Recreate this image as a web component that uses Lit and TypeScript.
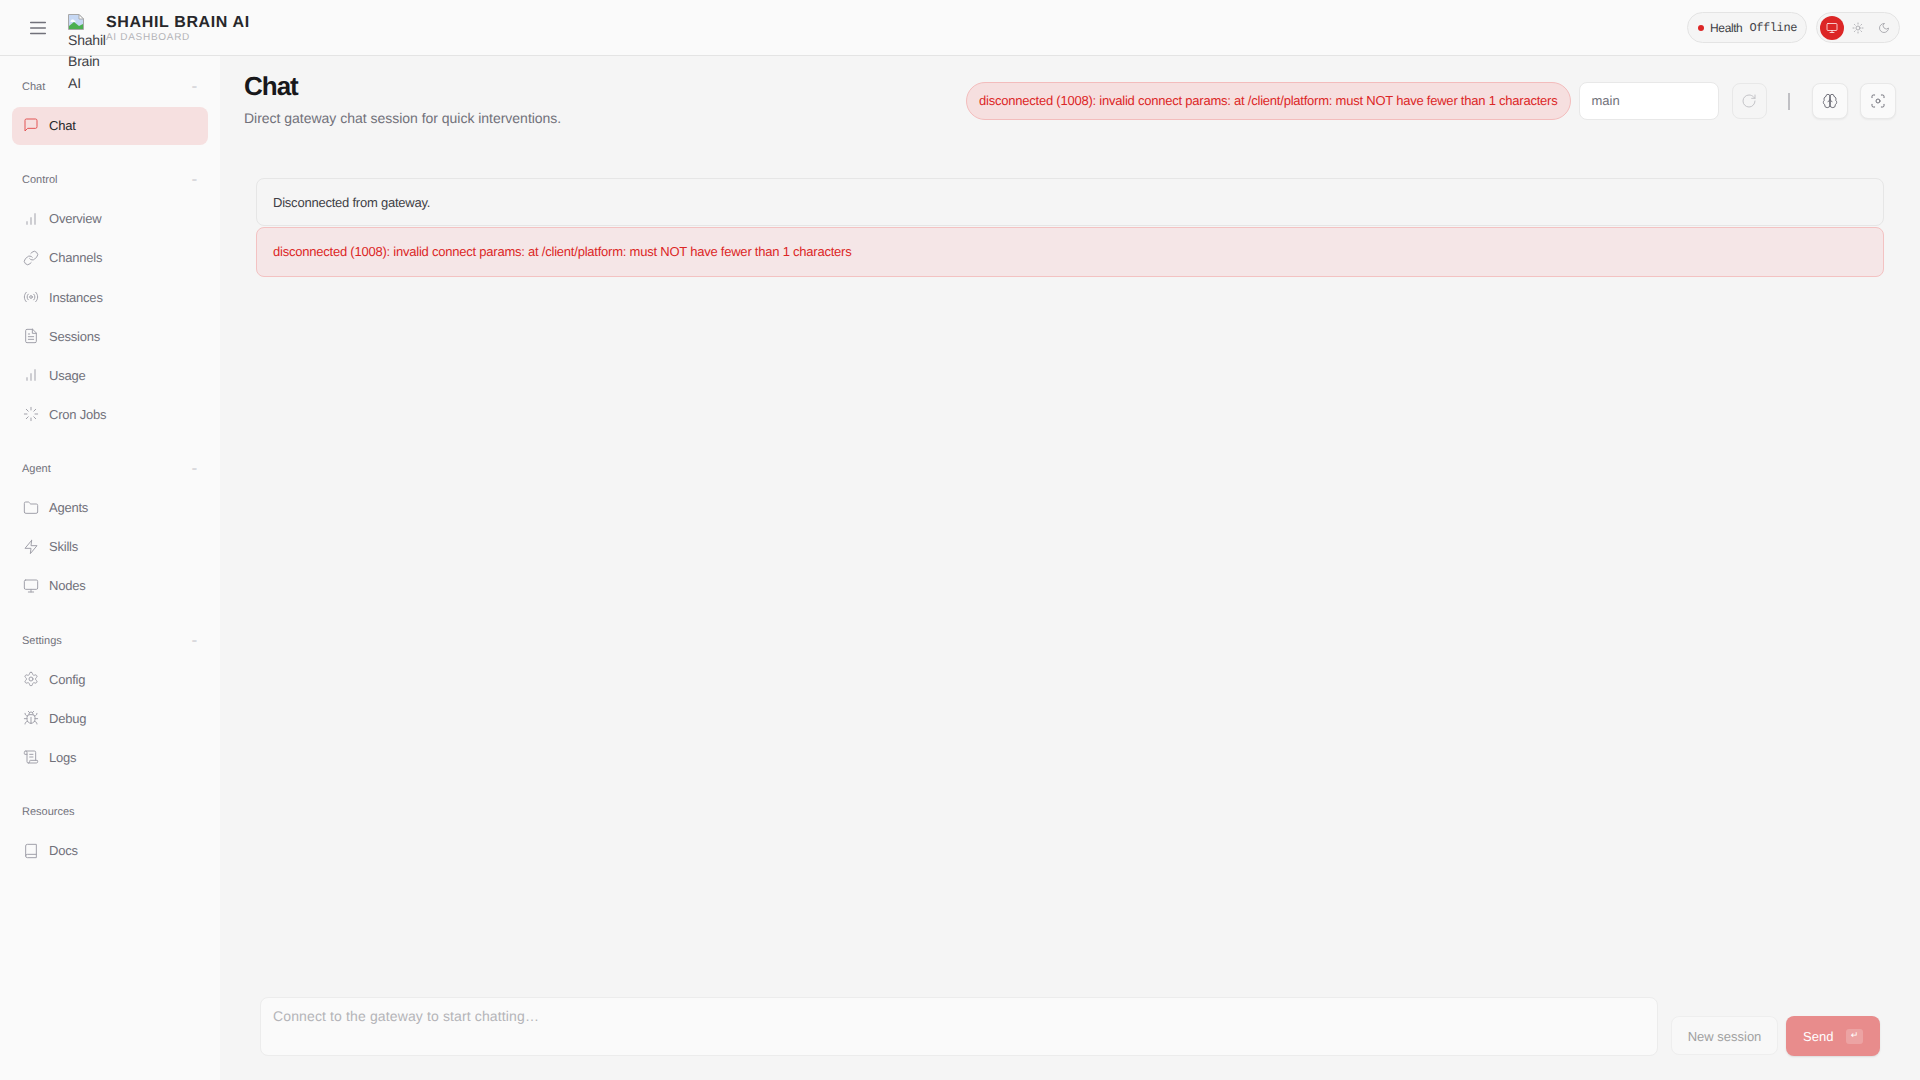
import { LitElement, html, css, svg } from "lit";
import { customElement } from "lit/decorators.js";

const ic = (body: unknown, cls = "") => html`<svg class="ic ${cls}" viewBox="0 0 24 24" fill="none" stroke="currentColor" stroke-width="1.5" stroke-linecap="round" stroke-linejoin="round">${body}</svg>`;
const p = (...ds: string[]) => ds.map((d) => svg`<path d=${d}></path>`);

const I = {
  menu: svg`<path d="M4 12h16M4 6h16M4 18h16"></path>`,
  chat: p("M21 15a2 2 0 0 1-2 2H7l-4 4V5a2 2 0 0 1 2-2h14a2 2 0 0 1 2 2z"),
  bars: p("M12 20V10", "M18 20V4", "M6 20v-4"),
  link: p("M10 13a5 5 0 0 0 7.54.54l3-3a5 5 0 0 0-7.07-7.07l-1.72 1.71", "M14 11a5 5 0 0 0-7.54-.54l-3 3a5 5 0 0 0 7.07 7.07l1.71-1.71"),
  radio: svg`${p("M4.9 19.1C1 15.2 1 8.8 4.9 4.9", "M7.8 16.2c-2.3-2.3-2.3-6.1 0-8.5", "M16.2 7.8c2.3 2.3 2.3 6.1 0 8.5", "M19.1 4.9C23 8.8 23 15.1 19.1 19")}<circle cx="12" cy="12" r="2"></circle>`,
  file: p("M14.5 2H6a2 2 0 0 0-2 2v16a2 2 0 0 0 2 2h12a2 2 0 0 0 2-2V7.5L14.5 2z", "M14 2v6h6", "M16 13H8", "M16 17H8", "M10 9H8"),
  loader: p("M12 2v4", "m16.2 7.8 2.9-2.9", "M18 12h4", "m16.2 16.2 2.9 2.9", "M12 18v4", "m4.9 19.1 2.9-2.9", "M2 12h4", "m4.9 4.9 2.9 2.9"),
  folder: p("M20 20a2 2 0 0 0 2-2V8a2 2 0 0 0-2-2h-7.9a2 2 0 0 1-1.69-.9L9.6 3.9A2 2 0 0 0 7.93 3H4a2 2 0 0 0-2 2v13a2 2 0 0 0 2 2Z"),
  zap: p("M13 2 3 14h9l-1 8 10-12h-9l1-8z"),
  monitor: svg`<rect x="2" y="3" width="20" height="14" rx="2"></rect>${p("M8 21h8", "M12 17v4")}`,
  gear: svg`${p("M12.22 2h-.44a2 2 0 0 0-2 2v.18a2 2 0 0 1-1 1.73l-.43.25a2 2 0 0 1-2 0l-.15-.08a2 2 0 0 0-2.73.73l-.22.38a2 2 0 0 0 .73 2.73l.15.1a2 2 0 0 1 1 1.72v.51a2 2 0 0 1-1 1.74l-.15.09a2 2 0 0 0-.73 2.73l.22.38a2 2 0 0 0 2.73.73l.15-.08a2 2 0 0 1 2 0l.43.25a2 2 0 0 1 1 1.73V20a2 2 0 0 0 2 2h.44a2 2 0 0 0 2-2v-.18a2 2 0 0 1 1-1.73l.43-.25a2 2 0 0 1 2 0l.15.08a2 2 0 0 0 2.73-.73l.22-.39a2 2 0 0 0-.73-2.73l-.15-.08a2 2 0 0 1-1-1.74v-.5a2 2 0 0 1 1-1.74l.15-.09a2 2 0 0 0 .73-2.73l-.22-.38a2 2 0 0 0-2.73-.73l-.15.08a2 2 0 0 1-2 0l-.43-.25a2 2 0 0 1-1-1.73V4a2 2 0 0 0-2-2z")}<circle cx="12" cy="12" r="3"></circle>`,
  bug: p("m8 2 1.88 1.88", "M14.12 3.88 16 2", "M9 7.13v-1a3.003 3.003 0 1 1 6 0v1", "M12 20c-3.3 0-6-2.7-6-6v-3a4 4 0 0 1 4-4h4a4 4 0 0 1 4 4v3c0 3.3-2.7 6-6 6", "M12 20v-9", "M6.53 9C4.6 8.8 3 7.1 3 5", "M6 13H2", "M3 21c0-2.1 1.7-3.9 3.8-4", "M20.97 5c0 2.1-1.6 3.8-3.5 4", "M22 13h-4", "M17.2 17c2.1.1 3.8 1.9 3.8 4"),
  scroll: p("M15 12h-5", "M15 8h-5", "M19 17V5a2 2 0 0 0-2-2H4", "M8 21h12a2 2 0 0 0 2-2v-1a1 1 0 0 0-1-1H11a1 1 0 0 0-1 1v1a2 2 0 1 1-4 0V5a2 2 0 1 0-4 0v2a1 1 0 0 0 1 1h3"),
  book: p("M4 19.5v-15A2.5 2.5 0 0 1 6.5 2H20v20H6.5a2.5 2.5 0 0 1 0-5H20"),
  sun: svg`<circle cx="12" cy="12" r="4"></circle>${p("M12 2v2", "M12 20v2", "m4.93 4.93 1.41 1.41", "m17.66 17.66 1.41 1.41", "M2 12h2", "M20 12h2", "m6.34 17.66-1.41 1.41", "m19.07 4.93-1.41 1.41")}`,
  moon: p("M12 3a6 6 0 0 0 9 9 9 9 0 1 1-9-9Z"),
  refresh: p("M21 12a9 9 0 1 1-9-9c2.52 0 4.93 1 6.74 2.74L21 8", "M21 3v5h-5"),
  brain: p("M12 5a3 3 0 1 0-5.997.125 4 4 0 0 0-2.526 5.77 4 4 0 0 0 .556 6.588A4 4 0 1 0 12 18Z", "M12 5a3 3 0 1 1 5.997.125 4 4 0 0 1 2.526 5.77 4 4 0 0 1-.556 6.588A4 4 0 1 1 12 18Z", "M15 13a4.5 4.5 0 0 1-3-4 4.5 4.5 0 0 1-3 4", "M12 18V5"),
  focus: svg`${p("M3 7V5a2 2 0 0 1 2-2h2", "M17 3h2a2 2 0 0 1 2 2v2", "M21 17v2a2 2 0 0 1-2 2h-2", "M7 21H5a2 2 0 0 1-2-2v-2")}<circle cx="12" cy="12" r="3"></circle>`,
};

const groups = [
  { label: "Chat", dash: true, items: [{ n: "Chat", i: I.chat, active: true }] },
  { label: "Control", dash: true, items: [
    { n: "Overview", i: I.bars }, { n: "Channels", i: I.link }, { n: "Instances", i: I.radio },
    { n: "Sessions", i: I.file }, { n: "Usage", i: I.bars }, { n: "Cron Jobs", i: I.loader },
  ] },
  { label: "Agent", dash: true, items: [{ n: "Agents", i: I.folder }, { n: "Skills", i: I.zap }, { n: "Nodes", i: I.monitor }] },
  { label: "Settings", dash: true, items: [{ n: "Config", i: I.gear }, { n: "Debug", i: I.bug }, { n: "Logs", i: I.scroll }] },
  { label: "Resources", dash: false, items: [{ n: "Docs", i: I.book }] },
];

const ERR = "disconnected (1008): invalid connect params: at /client/platform: must NOT have fewer than 1 characters";

@customElement("app-root")
export class AppRoot extends LitElement {
  static styles = css`
    :host { display: grid; grid-template-columns: 220px 1fr; grid-template-rows: 56px 1fr; height: 100vh; background: #f5f5f5; font-family: "Liberation Sans", Arial, sans-serif; color: #18181b; overflow: hidden; text-rendering: geometricPrecision; }
    * { box-sizing: border-box; }
    .ic { width: 16px; height: 16px; flex: none; display: block; }

    .top { grid-column: 1 / 3; display: flex; align-items: center; padding: 0 20px; background: #fafafa; border-bottom: 1px solid #e4e4e4; position: relative; z-index: 2; }
    .burger { width: 36px; height: 36px; display: flex; align-items: center; justify-content: center; color: #71717a; margin-right: 12px; }
    .burger .ic { width: 22px; height: 22px; }
    .logo { width: 38px; height: 28px; align-self: flex-start; margin-top: 14px; font-size: 14px; letter-spacing: -0.2px; line-height: 21.4px; color: #3f3f46; }
    .logo svg { display: block; width: 16px; height: 16px; }
    .logo span { display: block; width: 32px; }
    .brand { display: flex; flex-direction: column; padding-top: 3px; }
    .brand b { font-size: 16px; line-height: 18px; font-weight: 700; letter-spacing: 0.64px; color: #27272a; }
    .brand small { font-size: 10px; line-height: 12px; letter-spacing: 0.7px; color: #b4b4b8; }
    .spacer { flex: 1; }
    .pill { height: 31px; border: 1px solid #e4e4e4; border-radius: 16px; background: #f5f5f5; display: flex; align-items: center; }
    .health { padding: 0 9px 0 10px; font-size: 12px; letter-spacing: -0.4px; color: #3f3f46; margin-right: 9px; }
    .dot { width: 6px; height: 6px; border-radius: 50%; background: #dc2626; margin-right: 6px; }
    .health .hl { margin-right: 7px; }
    .health .hv { font-family: "Liberation Mono", monospace; }
    .theme { padding: 0 3px; gap: 2px; }
    .tb { width: 24px; height: 24px; border-radius: 50%; display: flex; align-items: center; justify-content: center; color: #98989f; }
    .tb .ic { width: 12px; height: 12px; }
    .tb.on { background: #dc2626; color: #fff; }

    .side { background: #fafafa; padding: 16.9px 12px 0; overflow: hidden; }
    .group { margin-bottom: 21.3px; }
    .glabel { height: 26px; margin-bottom: 8px; padding: 1.6px 10px 0; display: flex; align-items: center; justify-content: space-between; font-size: 11px; color: #71717a; }
    .glabel i { font-style: normal; font-size: 9px; color: #a1a1aa; padding-right: 1px; }
    .items { display: flex; flex-direction: column; gap: 1px; }
    .item { height: 38.1px; display: flex; align-items: center; gap: 10px; padding-left: 11px; padding-bottom: 1px; border-radius: 8px; font-size: 13px; letter-spacing: -0.22px; color: #71717a; }
    .item .ic { color: #a1a1aa; }
    .item.on { background: #f6e0e0; color: #27272a; }
    .item.on .ic { color: #dc2626; opacity: .75; }

    .main { display: flex; flex-direction: column; padding: 14px 24px 24px 24px; min-height: 0; min-width: 0; }
    .head { display: flex; justify-content: space-between; }
    h1 { margin: 0; font-size: 26px; line-height: 32px; font-weight: 700; letter-spacing: -1px; color: #18181b; }
    .sub { margin-top: 6px; font-size: 14px; line-height: 20px; letter-spacing: -0.02px; color: #71717a; }
    .ctrl { display: flex; align-items: center; height: 38px; margin-top: 12px; }
    .errpill { height: 38px; display: flex; align-items: center; padding: 0 12px 1px; border: 1px solid #f3bcbc; border-radius: 19px; background: #f6dfdf; font-size: 13px; letter-spacing: -0.225px; color: #dc2626; white-space: nowrap; margin-right: 8px; }
    .sess { width: 140px; height: 38px; border: 1px solid #e8e8e8; border-radius: 8px; background: #fff; padding: 0 12px 1px; display: flex; align-items: center; font-size: 13px; color: #71717a; margin-right: 13px; }
    .ib { width: 36px; height: 36px; border: 1px solid #e8e8e8; border-radius: 8px; background: #fafafa; display: flex; align-items: center; justify-content: center; color: #71717a; box-shadow: 0 1px 2px rgba(0,0,0,.05); }
    .ib.dis { width: 35px; background: #f5f5f5; color: #c4c4c8; box-shadow: none; margin-right: 21.5px; }
    .pipe { width: 2px; height: 17px; background: #c0c0c4; margin-right: 22px; }
    .ib.gap { margin-right: 12px; }

    .thread { margin: 50px 12px 0 12px; display: flex; flex-direction: column; gap: 1px; }
    .call { border: 1px solid #e6e6e6; border-radius: 8px; padding: 14px 16px 12px; font-size: 13px; letter-spacing: -0.225px; line-height: 20px; color: #3f3f46; background: #f5f5f5; }
    .call.err { padding: 14px 16px; border-color: #f3c2c2; background: #f5e6e7; color: #dc2626; }

    .composer { margin: auto 16px 0 16px; display: flex; align-items: flex-end; }
    textarea { flex: 1; min-width: 0; height: 59px; resize: none; border: 1px solid #ececec; border-radius: 8px; background: #fafafa; padding: 9px 12px; font: 14px/18px "Liberation Sans", Arial, sans-serif; letter-spacing: 0.13px; text-rendering: geometricPrecision; margin: 0 13px 0 0; outline: none; }
    textarea::placeholder { color: #b4b4b8; opacity: 1; }
    .new { width: 107px; height: 39px; border: 1px solid #eeeeee; border-radius: 8px; background: #f8f8f8; display: flex; align-items: center; justify-content: center; padding-top: 1px; font-size: 13px; color: #a1a1a1; margin: 0 8px 1px 0; }
    .send { width: 94px; height: 40px; border-radius: 8px; background: #e88c8c; color: #fff; display: flex; align-items: center; padding: 0 17px; font-size: 13px; justify-content: space-between; box-shadow: 0 1px 2px rgba(0,0,0,.1); }
    kbd { width: 17px; height: 15px; border-radius: 3px; background: rgba(255,255,255,.2); font: 9px "DejaVu Sans", sans-serif; display: flex; align-items: center; justify-content: center; color: #fff; }
  `;

  render() {
    return html`
      <header class="top">
        <div class="burger">${ic(I.menu)}</div>
        <div class="logo">
          <svg viewBox="0 0 16 16" aria-hidden="true">
            <path d="M0.5 0.5H11L15.5 5V15.5H0.5Z" fill="#c6d8f4" stroke="#a8a8a8"></path>
            <path d="M11 0.5V5H15.5Z" fill="#fff" stroke="#a8a8a8"></path>
            <path d="M1 15V12L6 8L11 12L15 10V15Z" fill="#4caf50"></path>
            <path d="M3 6.5C3 5 6 5 6.5 6.5C8 6.5 8 8 6.5 8H3.5C2 8 2 6.5 3 6.5Z" fill="#fff"></path>
          </svg>
          <span>Shahil Brain AI</span>
        </div>
        <div class="brand"><b>SHAHIL BRAIN AI</b><small>AI DASHBOARD</small></div>
        <div class="spacer"></div>
        <div class="pill health"><span class="dot"></span><span class="hl">Health</span><span class="hv">Offline</span></div>
        <div class="pill theme">
          <div class="tb on">${ic(I.monitor)}</div>
          <div class="tb">${ic(I.sun)}</div>
          <div class="tb">${ic(I.moon)}</div>
        </div>
      </header>
      <nav class="side">
        ${groups.map((g) => html`
          <section class="group">
            <div class="glabel"><span>${g.label}</span>${g.dash ? html`<i>−</i>` : ""}</div>
            <div class="items">
              ${g.items.map((it: any) => html`<div class="item ${it.active ? "on" : ""}">${ic(it.i)}<span>${it.n}</span></div>`)}
            </div>
          </section>`)}
      </nav>
      <main class="main">
        <div class="head">
          <div>
            <h1>Chat</h1>
            <div class="sub">Direct gateway chat session for quick interventions.</div>
          </div>
          <div class="ctrl">
            <div class="errpill">${ERR}</div>
            <div class="sess">main</div>
            <div class="ib dis">${ic(I.refresh)}</div>
            <div class="pipe"></div>
            <div class="ib gap">${ic(I.brain)}</div>
            <div class="ib">${ic(I.focus)}</div>
          </div>
        </div>
        <div class="thread">
          <div class="call">Disconnected from gateway.</div>
          <div class="call err">${ERR}</div>
        </div>
        <div class="composer">
          <textarea disabled placeholder="Connect to the gateway to start chatting…"></textarea>
          <div class="new">New session</div>
          <div class="send"><span>Send</span><kbd>↵</kbd></div>
        </div>
      </main>
    `;
  }
}
